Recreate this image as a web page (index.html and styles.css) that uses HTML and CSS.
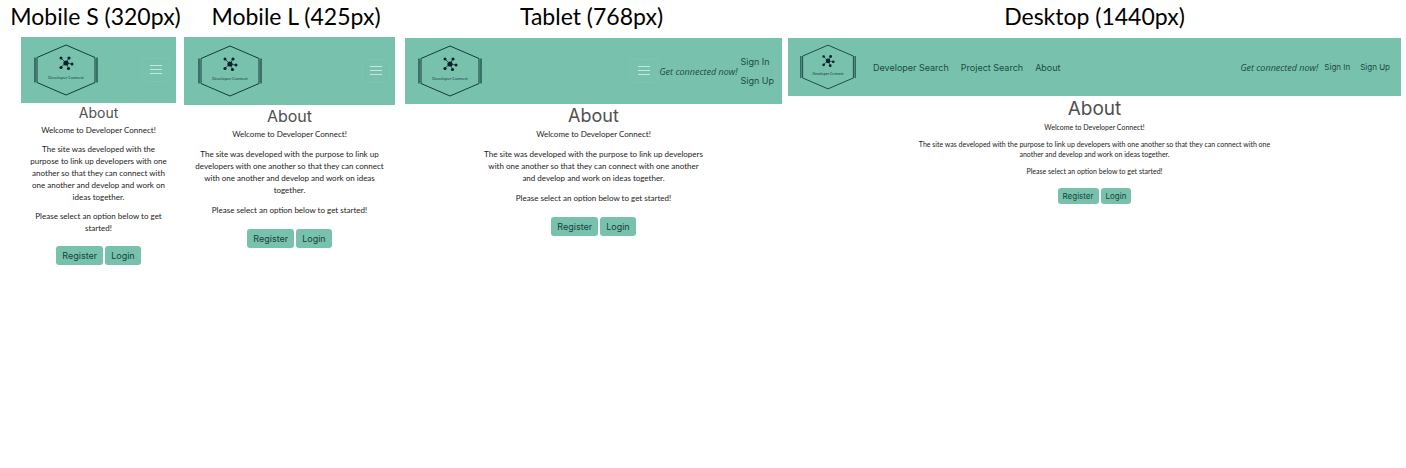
FILE: index.html
```html
<!DOCTYPE html>
<html lang="en">
<head>
<meta charset="utf-8">
<title>Developer Connect – responsive layouts</title>
<link rel="stylesheet" href="styles.css">
</head>
<body>
<svg class="defs" aria-hidden="true">
  <symbol id="mark" viewBox="0 0 64 52">
    <g fill="none" stroke="#123c3c" stroke-width="1">
      <path d="M3 13.500L32 1l29 12.500v25L32 51 3 38.500z"/>
      <path d="M1 13.500v25M63 13.500v25" stroke-width="1.200"/>
      <path d="M32 19l-5-5M32 19l3-5M32 19l6 1M32 19l2.500 5M32 19l-5 4" stroke-width=".8"/>
    </g>
    <g fill="#06202a">
      <circle cx="32" cy="19" r="2.600"/>
      <circle cx="27" cy="14" r="1.500"/><circle cx="35" cy="14" r="1.600"/>
      <circle cx="38" cy="20" r="1.500"/><circle cx="34.500" cy="24.500" r="1.600"/>
      <circle cx="27" cy="23.500" r="1.600"/>
    </g>
  </symbol>
  <symbol id="bars" viewBox="0 0 12 10">
    <path d="M0 .5h12M0 4.500h12M0 8.500h12" stroke="#c4e8dc" stroke-width="1"/>
  </symbol>
</svg>
<main class="board">
  <figure class="device mobile-s">
    <figcaption>Mobile S (320px)</figcaption>
    <div class="screen">
      <nav class="navbar">
        <svg class="logo" viewBox="0 0 64 52"><use href="#mark"/><text x="32" y="35" text-anchor="middle">Developer Connect</text></svg>
        <button class="toggler" aria-label="Toggle navigation"><svg><use href="#bars"/></svg></button>
      </nav>
      <section class="about">
        <h2>About</h2>
        <p>Welcome to Developer Connect!</p>
        <p>The site was developed with the purpose to link up developers with one another so that they can connect with one another and develop and work on ideas together.</p>
        <p>Please select an option below to get started!</p>
        <div class="actions"><button class="btn">Register</button><button class="btn">Login</button></div>
      </section>
    </div>
  </figure>
  <figure class="device mobile-l">
    <figcaption>Mobile L (425px)</figcaption>
    <div class="screen">
      <nav class="navbar">
        <svg class="logo" viewBox="0 0 64 52"><use href="#mark"/><text x="32" y="35" text-anchor="middle">Developer Connect</text></svg>
        <button class="toggler" aria-label="Toggle navigation"><svg><use href="#bars"/></svg></button>
      </nav>
      <section class="about">
        <h2>About</h2>
        <p>Welcome to Developer Connect!</p>
        <p>The site was developed with the purpose to link up developers with one another so that they can connect with one another and develop and work on ideas together.</p>
        <p>Please select an option below to get started!</p>
        <div class="actions"><button class="btn">Register</button><button class="btn">Login</button></div>
      </section>
    </div>
  </figure>
  <figure class="device tablet">
    <figcaption>Tablet (768px)</figcaption>
    <div class="screen">
      <nav class="navbar">
        <svg class="logo" viewBox="0 0 64 52"><use href="#mark"/><text x="32" y="35" text-anchor="middle">Developer Connect</text></svg>
        <button class="toggler" aria-label="Toggle navigation"><svg><use href="#bars"/></svg></button>
        <em class="tagline">Get connected now!</em>
        <div class="account"><a href="#">Sign In</a><a href="#">Sign Up</a></div>
      </nav>
      <section class="about">
        <h2>About</h2>
        <p>Welcome to Developer Connect!</p>
        <p>The site was developed with the purpose to link up developers with one another so that they can connect with one another and develop and work on ideas together.</p>
        <p>Please select an option below to get started!</p>
        <div class="actions"><button class="btn">Register</button><button class="btn">Login</button></div>
      </section>
    </div>
  </figure>
  <figure class="device desktop">
    <figcaption>Desktop (1440px)</figcaption>
    <div class="screen">
      <nav class="navbar">
        <svg class="logo" viewBox="0 0 64 52"><use href="#mark"/><text x="32" y="35" text-anchor="middle">Developer Connect</text></svg>
        <div class="links"><a href="#">Developer Search</a><a href="#">Project Search</a><a href="#">About</a></div>
        <em class="tagline">Get connected now!</em>
        <div class="account"><a href="#">Sign In</a><a href="#">Sign Up</a></div>
      </nav>
      <section class="about">
        <h2>About</h2>
        <p>Welcome to Developer Connect!</p>
        <p>The site was developed with the purpose to link up developers with one another so that they can connect with one another and develop and work on ideas together.</p>
        <p>Please select an option below to get started!</p>
        <div class="actions"><button class="btn">Register</button><button class="btn">Login</button></div>
      </section>
    </div>
  </figure>
</main>
</body>
</html>
```
FILE: styles.css
```css
* { box-sizing: border-box; }
body { margin: 0; background: #fff; color: #222; font-family: Lato, sans-serif; }
.defs { position: absolute; width: 0; height: 0; }
.board {
  display: grid;
  grid-template-columns: minmax(0, 180fr) minmax(0, 220fr) minmax(0, 385fr) minmax(0, 621fr);
  align-items: start;
}
.device { margin: 0; }
.mobile-s { padding: 0 4px 0 21px; }
.mobile-l { padding: 0 5px 0 4px; }
.tablet { padding: 0 3px 0 5px; }
.desktop { padding: 0 5px 0 3px; }
figcaption {
  display: flex;
  justify-content: center;
  padding-bottom: 5px;
  font-size: 23px;
  line-height: 32px;
  color: #000;
  white-space: nowrap;
}
.mobile-s figcaption { margin: 0 0 0 -6px; }
.mobile-l figcaption { padding-left: 13px; }
.tablet figcaption, .desktop figcaption { padding-bottom: 6px; }
.tablet figcaption { padding-right: 4px; }

.navbar {
  display: flex;
  align-items: center;
  height: 66px;
  padding: 0 6px 0 13px;
  background: #78c2ad;
  font: 9px Inter, sans-serif;
}
.mobile-l .navbar { height: 68px; padding: 0 5px 0 14px; }
.tablet .navbar { padding-right: 8px; }
.desktop .navbar { height: 58px; padding: 0 11px 0 12px; }
.navbar a { color: #1c4a40; text-decoration: none; white-space: nowrap; }
.logo { flex: none; width: 64px; height: 52px; }
.desktop .logo { width: 56px; height: 46px; }
.logo text { fill: #06202a; font: 4px "Open Sans", sans-serif; }
.toggler {
  display: flex;
  margin-left: auto;
  padding: 6px 7px;
  border: 1px solid #7dc5b0;
  border-radius: 3px;
  background: none;
}
.toggler svg { width: 12px; height: 10px; }
.tagline { color: #1c4a40; font-family: "Open Sans", sans-serif; white-space: nowrap; }
.tablet .tagline { margin: 0 3px 0 2px; }
.desktop .tagline { margin: 0 6px 0 auto; }
.links { display: flex; gap: 12px; margin-left: 17px; }
.account { display: flex; gap: 10px; }
.tablet .account { flex-direction: column; gap: 8px; }
.desktop .account { font-size: 8px; }

.about { text-align: center; font-size: 8px; line-height: 12px; }
.about h2 {
  margin: 0;
  color: #505050;
  font: 400 14px/20px Inter, sans-serif;
}
.about p { margin: 0 auto 8px; padding: 0 6px; }
.about h2 + p { padding-top: 1px; }
.mobile-s .about p { margin-bottom: 7px; }
.mobile-l .about h2 { font-size: 16px; line-height: 22px; }
.tablet .about h2 { font-size: 18px; line-height: 23px; }
.tablet .about p { max-width: 234px; }
.desktop .about { font-size: 7px; line-height: 10px; }
.desktop .about h2 { font-size: 19px; line-height: 25px; }
.desktop .about p { max-width: 376px; margin-bottom: 7px; }
.actions { display: flex; justify-content: center; gap: 2px; padding-top: 5px; }
.btn {
  padding: 3px 6px;
  border: 0;
  border-radius: 3px;
  background: #78c2ad;
  color: #173f36;
  font: 9px/13px Inter, sans-serif;
}
.desktop .btn { padding: 3px 5px; font-size: 8px; line-height: 10px; }
```
